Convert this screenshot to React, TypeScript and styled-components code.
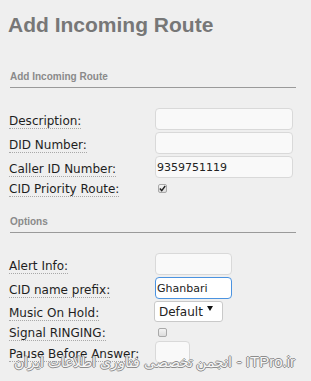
import React from 'react';
import styled, { createGlobalStyle } from 'styled-components';

const GlobalStyle = createGlobalStyle`
  html, body {
    margin: 0;
    padding: 0;
    background: #efefef;
    overflow: hidden;
  }
`;

const Page = styled.div`
  position: relative;
  display: flow-root;
  height: 381px;
  padding: 0 8px;
  font-family: 'DejaVu Sans', Verdana, sans-serif;
`;

const Title = styled.h1`
  margin: 13px 0 0;
  font-family: 'Liberation Sans', Arial, sans-serif;
  font-size: 21px;
  line-height: 24px;
  font-weight: bold;
  color: #777;
`;

const SectionHeader = styled.div<{ $top: number }>`
  margin: ${p => p.$top}px 7px 20px 2px;
  padding-bottom: 4px;
  border-bottom: 1px solid #9a9a9a;
  font-family: 'Liberation Sans', Arial, sans-serif;
  font-size: 10px;
  line-height: 12px;
  font-weight: bold;
  color: #8a8a8a;
`;

const Rows = styled.div`
  display: flex;
  flex-direction: column;
  gap: 2px;
`;

const Row = styled.div<{ $h?: number }>`
  display: flex;
  align-items: center;
  ${p => (p.$h ? `height: ${p.$h}px;` : '')}
`;

const LabelCell = styled.div`
  width: 146px;
  padding-left: 1px;
  flex-shrink: 0;
`;

const Label = styled.span`
  font-size: 12px;
  color: #1e1e1e;
  border-bottom: 1px dotted #a8a8a8;
`;

const TextInput = styled.input<{ $w: number; $focus?: boolean }>`
  box-sizing: border-box;
  width: ${p => p.$w}px;
  height: 22px;
  margin: 0;
  padding: 0 1px;
  border: 1px solid ${p => (p.$focus ? '#4b93e0' : '#d9d9d9')};
  border-radius: 4px;
  background: ${p => (p.$focus ? '#fff' : '#f9f9f9')};
  font-family: 'DejaVu Sans', Verdana, sans-serif;
  font-size: 11px;
  color: #222;
  outline: none;
`;

const Check = styled.span`
  box-sizing: border-box;
  width: 9px;
  height: 9px;
  margin: 1px 0 0 3px;
  border: 1px solid #a9a9a9;
  border-radius: 2px;
  background: linear-gradient(#f4f4f4, #dcdcdc);
  display: flex;
  align-items: center;
  justify-content: center;
`;

const Select = styled.div`
  box-sizing: border-box;
  width: 69px;
  height: 21px;
  margin-left: -1px;
  padding: 0 0 0 4px;
  border: 1px solid #c9c9c9;
  border-radius: 3px;
  background: #fff;
  display: flex;
  align-items: center;
  gap: 4px;
  font-size: 12px;
  color: #222;
`;

const Arrow = styled.svg`
  align-self: flex-start;
  margin-top: 4px;
`;

const Watermark = styled.div`
  position: absolute;
  top: 353px;
  left: 10px;
  right: 16px;
  text-align: right;
  white-space: nowrap;
  font-family: 'Liberation Sans', Arial, sans-serif;
  font-size: 15px;
  line-height: 18px;
  color: #f6f6f6;
  text-shadow: 1px 0 0 #8c8c8c, -1px 0 0 #8c8c8c, 0 1px 0 #8c8c8c, 0 -1px 0 #8c8c8c;
`;

const WatermarkFa = styled.span`
  font-size: 14px;
`;

function Field({ label, children }: { label: string; children: React.ReactNode }) {
  return (
    <Row>
      <LabelCell>
        <Label>{label}</Label>
      </LabelCell>
      {children}
    </Row>
  );
}

function CheckField({ label, checked }: { label: string; checked?: boolean }) {
  return (
    <Row $h={15}>
      <LabelCell>
        <Label>{label}</Label>
      </LabelCell>
      <Check>
        {checked && (
          <svg width="7" height="7" viewBox="0 0 7 7">
            <path d="M0.8 3.6 L2.7 5.6 L6.2 1" stroke="#222" strokeWidth="1.4" fill="none" />
          </svg>
        )}
      </Check>
    </Row>
  );
}

export default function App() {
  return (
    <Page>
      <GlobalStyle />
      <Title>Add Incoming Route</Title>

      <SectionHeader $top={34}>Add Incoming Route</SectionHeader>
      <Rows>
        <Field label="Description:">
          <TextInput $w={138} defaultValue="" />
        </Field>
        <Field label="DID Number:">
          <TextInput $w={138} defaultValue="" />
        </Field>
        <Field label="Caller ID Number:">
          <TextInput $w={138} defaultValue="9359751119" />
        </Field>
        <CheckField label="CID Priority Route:" checked />
      </Rows>

      <SectionHeader $top={21}>Options</SectionHeader>
      <Rows>
        <Field label="Alert Info:">
          <TextInput $w={77} defaultValue="" />
        </Field>
        <Field label="CID name prefix:">
          <TextInput $w={77} $focus defaultValue="Ghanbari" />
        </Field>
        <Field label="Music On Hold:">
          <Select>
            Default
            <Arrow width="6" height="5" viewBox="0 0 6 5">
              <polygon points="0,0 6,0 3,5" fill="#111" />
            </Arrow>
          </Select>
        </Field>
        <CheckField label="Signal RINGING:" />
        <Field label="Pause Before Answer:">
          <TextInput $w={35} defaultValue="" />
        </Field>
      </Rows>

      <Watermark>
        <WatermarkFa>انجمن تخصصی فناوری اطلاعات ایران</WatermarkFa> - ITPro.ir
      </Watermark>
    </Page>
  );
}
